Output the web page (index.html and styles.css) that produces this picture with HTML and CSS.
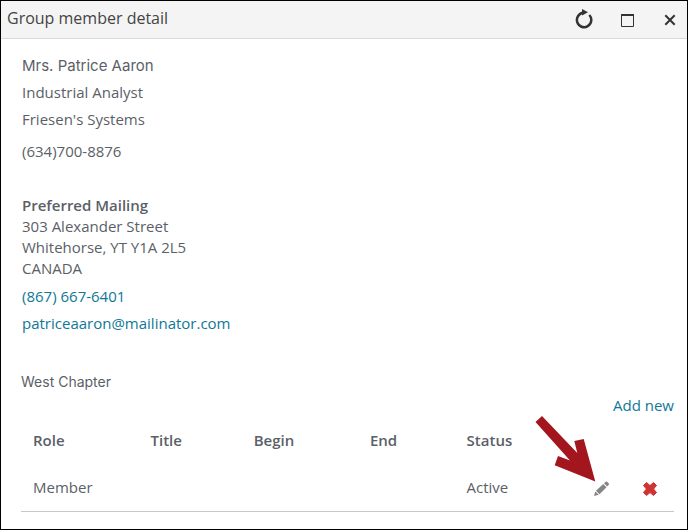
FILE: index.html
```html
<!DOCTYPE html>
<html lang="en">
<head>
    <meta charset="UTF-8">
    <meta name="viewport" content="width=device-width, initial-scale=1.0">
    <title>Group member detail</title>
    <link rel="stylesheet" href="styles.css">
</head>
<body>
    <div class="window">
        <header class="title-bar">
            <h1>Group member detail</h1>
            <div class="window-buttons">
                <button type="button" aria-label="Refresh">
                    <svg width="20" height="20" viewBox="0 0 20 20">
                        <path d="M9.5 3.8A7.2 7.2 0 1 0 15.3 6" fill="none" stroke="#333" stroke-width="2.5"/>
                        <path d="M8 0L14 3.2L8 6.5z" fill="#333"/>
                    </svg>
                </button>
                <button type="button" aria-label="Maximize">
                    <svg width="20" height="20" viewBox="0 0 20 20">
                        <path d="M4.5 6V17.5H16.5V6" fill="none" stroke="#333"/>
                        <path d="M4 6H17" stroke="#333" stroke-width="2"/>
                    </svg>
                </button>
                <button type="button" aria-label="Close">
                    <svg width="20" height="20" viewBox="0 0 20 20">
                        <path d="M5.3 6.3L14.7 15.7M14.7 6.3L5.3 15.7" fill="none" stroke="#333" stroke-width="2"/>
                    </svg>
                </button>
            </div>
        </header>

        <main class="content">
            <section class="member">
                <h2>Mrs. Patrice Aaron</h2>
                <p>Industrial Analyst</p>
                <p>Friesen's Systems</p>
                <p class="phone">(634)700-8876</p>
            </section>

            <section class="mailing">
                <h3>Preferred Mailing</h3>
                <address>
                    303 Alexander Street<br>
                    Whitehorse, YT Y1A 2L5<br>
                    CANADA
                </address>
                <p><a href="tel:8676676401">(867) 667-6401</a></p>
                <p><a href="mailto:patriceaaron@mailinator.com">patriceaaron@mailinator.com</a></p>
            </section>

            <section class="chapter">
                <h2>West Chapter</h2>
                <a class="add-new" href="#">Add new</a>
                <table>
                    <thead>
                        <tr>
                            <th class="col-role">Role</th>
                            <th class="col-title">Title</th>
                            <th class="col-begin">Begin</th>
                            <th class="col-end">End</th>
                            <th class="col-status">Status</th>
                            <th class="col-edit"></th>
                            <th></th>
                        </tr>
                    </thead>
                    <tbody>
                        <tr>
                            <td>Member</td>
                            <td></td>
                            <td></td>
                            <td></td>
                            <td>Active</td>
                            <td class="action">
                                <div class="edit">
                                    <button type="button" aria-label="Edit">
                                        <svg width="16" height="16" viewBox="0 0 16 16" fill="#858585">
                                            <path d="M0 15L1.3 10.4L4.8 13.8z"/>
                                            <path d="M2 9.7L9.2 3L12.5 6.3L5.5 13.2z"/>
                                            <path d="M10 2.3L11.8 .7Q12.5 .2 13.2 .8L14.8 2.4Q15.3 3 14.8 3.8L13.2 5.5z"/>
                                        </svg>
                                    </button>
                                    <svg class="arrow" width="61" height="67" viewBox="0 0 61 67">
                                        <path d="M.5 7L7 1L42.3 38L39.3 26L48.7 24L60.3 66.5L19.7 50.3L23 41L35 45.5z" fill="#a3161e"/>
                                    </svg>
                                </div>
                            </td>
                            <td class="action">
                                <button type="button" aria-label="Delete">
                                    <svg width="14" height="14" viewBox="0 0 14 14">
                                        <path d="M3.5 .5L7 3.5L10.5 .5L13.5 3.5L10.6 7L13.5 10.5L10.5 13.5L7 10.6L3.5 13.5L.5 10.5L3.4 7L.5 3.5z" fill="#cf3434" stroke="#cf3434" stroke-linejoin="round"/>
                                    </svg>
                                </button>
                            </td>
                        </tr>
                    </tbody>
                </table>
            </section>
        </main>
    </div>
</body>
</html>
```
FILE: styles.css
```css
* {
    box-sizing: border-box;
}
body {
    margin: 0;
    font-family: "Open Sans", sans-serif;
    font-size: 15px;
    line-height: 21px;
    color: #5b5f68;
    background-color: #fff;
}
h1, h2, h3, p {
    margin: 0;
    font-size: 15px;
}
a {
    color: #107896;
    text-decoration: none;
}
a:hover {
    text-decoration: underline;
}
button {
    display: block;
    padding: 0;
    border: none;
    background: none;
    cursor: pointer;
}
svg {
    display: block;
}
.window {
    min-height: 100vh;
    border: 1px solid #000;
}
.title-bar {
    display: flex;
    align-items: center;
    justify-content: space-between;
    height: 38px;
    padding: 0 7px 2px 6px;
    background-color: #f4f4f4;
    border-bottom: 1px solid #d9d9d9;
}
.title-bar h1 {
    font-size: 16px;
    font-weight: normal;
    color: #444;
}
.window-buttons {
    display: flex;
    gap: 23px;
}
.content {
    padding: 16px 13px 17px 20px;
}
.member, .mailing {
    padding-left: 1px;
}
.member h2, .chapter h2 {
    font-family: Inter, sans-serif;
    font-weight: normal;
}
.chapter h2 {
    font-size: 14px;
}
.member p, .mailing p {
    margin-top: 6px;
}
.member .phone {
    margin-top: 11px;
}
.mailing {
    margin-top: 33px;
}
.mailing h3 {
    font-weight: 600;
}
.mailing address {
    margin-bottom: 7px;
    font-style: normal;
}
.chapter {
    margin-top: 37px;
}
.add-new {
    display: block;
    width: fit-content;
    margin-top: 3px;
    margin-left: auto;
}
table {
    width: 100%;
    margin-top: 1px;
    table-layout: fixed;
    border-collapse: collapse;
}
th, td {
    padding: 13px 0 13px 12px;
    text-align: left;
}
th {
    font-weight: 600;
}
td {
    border-bottom: 1px solid #c8c8c8;
}
.col-role {
    width: 18%;
}
.col-title {
    width: 15.8%;
}
.col-begin {
    width: 17.8%;
}
.col-end {
    width: 14.8%;
}
.col-status {
    width: 19.5%;
}
.col-edit {
    width: 7.5%;
}
.action {
    padding-top: 16px;
}
.edit {
    position: relative;
}
/* arrow pointing at the edit button */
.arrow {
    position: absolute;
    right: 100%;
    bottom: 100%;
    margin: 0 -2px -1px 0;
    pointer-events: none;
}
```
